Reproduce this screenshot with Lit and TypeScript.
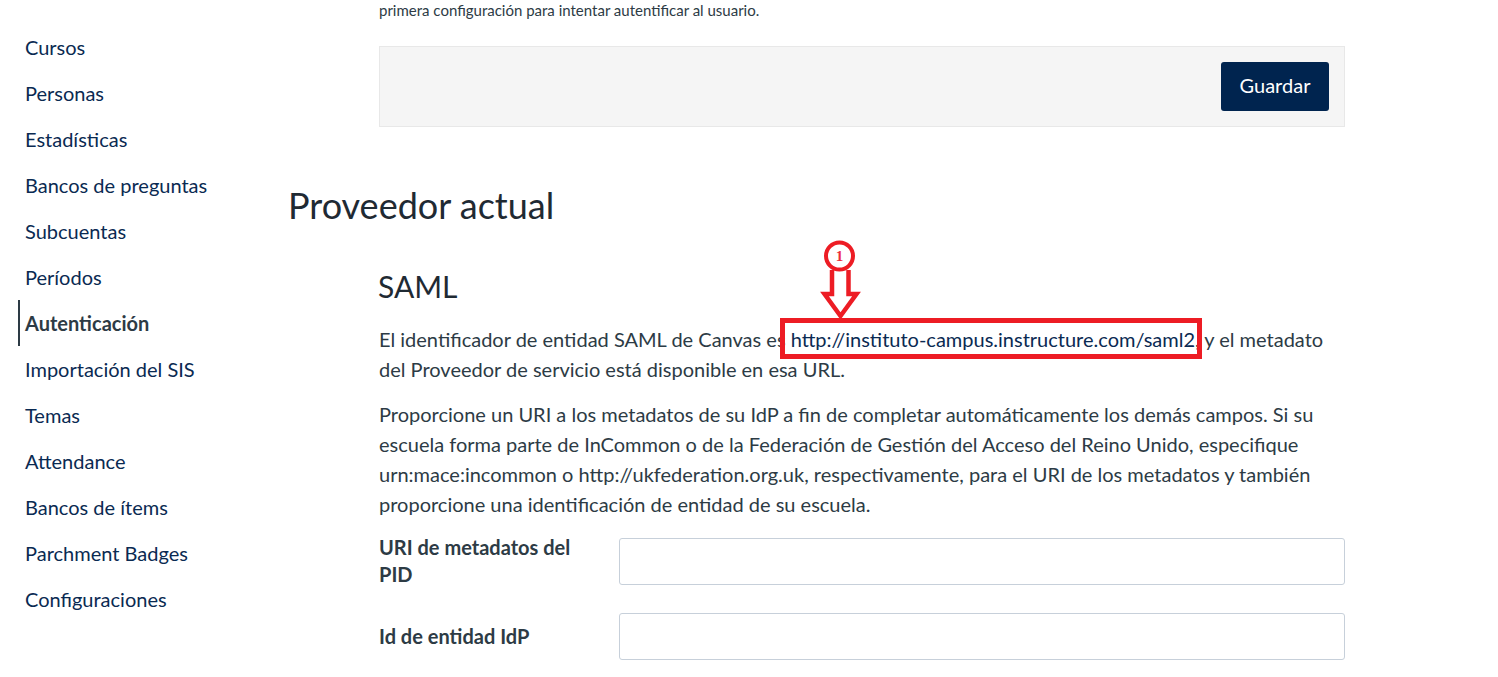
import { LitElement, html, css } from "lit";
import { customElement } from "lit/decorators.js";

const NAV = ["Cursos","Personas","Estadísticas","Bancos de preguntas","Subcuentas","Períodos","Autenticación","Importación del SIS","Temas","Attendance","Bancos de ítems","Parchment Badges","Configuraciones"];

@customElement("app-root")
export class AppRoot extends LitElement {
  static styles = css`
    :host { display: block; height: 677px; overflow: hidden; background: #fff; position: relative;
      font-family: Lato, "Liberation Sans", sans-serif; color: #2d3b45; font-size: 20px; }
    * { box-sizing: border-box; }
    .page { display: flex; align-items: flex-start; }
    nav { width: 289px; flex: none; padding: 24px 0 0 18px; display: flex; flex-direction: column; }
    nav a { height: 46px; line-height: 46px; padding-left: 7px; font-size: 20px; color: #0a2a52; }
    nav a.active { font-weight: 700; color: #2d3b45; border-left: 2px solid #2d3b45; padding-left: 5px; }
    main { width: 1056px; flex: none; }
    .note { margin: 0 0 0 90px; font-size: 15px; line-height: 20px; }
    .panel { margin: 26px 0 0 90px; height: 81px; background: #f5f5f5; border: 1px solid #e8e8e8;
      display: flex; justify-content: flex-end; align-items: center; padding-right: 15px; }
    .btn { width: 108px; height: 49px; border-radius: 3px; background: #00244f; color: #fff; display: flex;
      align-items: center; justify-content: center; font-size: 20px; padding-bottom: 4px; }
    h1 { font-weight: 400; font-size: 36px; line-height: 44px; margin: 56px 0 0 -1px; color: #1f2a33; }
    .section { margin-left: 90px; }
    h2 { font-weight: 400; font-size: 30px; line-height: 36px; margin: 41px 0 0 -1px; color: #1f2a33; }
    p { margin: 0; line-height: 30px; }
    .p1 { margin-top: 20px; }
    .p2 { margin-top: 15px; }
    .link { color: #0a2a52; }
    .field { display: grid; grid-template-columns: 240px 1fr; align-items: center; }
    .f1 { margin-top: 15px; }
    .f2 { margin-top: 25px; }
    label { font-weight: 700; line-height: 27px; width: 200px; color: #2d3b45; }
    .input { height: 47px; border: 1px solid #c7d0da; border-radius: 3px; background: #fff; }
    .f2 { margin-top: 25px; }
    .note-art { position: absolute; left: 780px; top: 240px; width: 422px; height: 120px; pointer-events: none; }
  `;

  render() {
    return html`
      <div class="page">
        <nav>${NAV.map((n) => html`<a class=${n === "Autenticación" ? "active" : ""}>${n}</a>`)}</nav>
        <main>
          <div class="note">primera configuración para intentar autentificar al usuario.</div>
          <div class="panel"><div class="btn">Guardar</div></div>
          <h1>Proveedor actual</h1>
          <div class="section">
            <h2>SAML</h2>
            <p class="p1">El identificador de entidad SAML de Canvas es <span class="link">http://instituto-campus.instructure.com/saml2</span>, y el metadato del Proveedor de servicio está disponible en esa URL.</p>
            <p class="p2">Proporcione un URI a los metadatos de su IdP a fin de completar automáticamente los demás campos. Si su escuela forma parte de InCommon o de la Federación de Gestión del Acceso del Reino Unido, especifique urn:mace:incommon o http://ukfederation.org.uk, respectivamente, para el URI de los metadatos y también proporcione una identificación de entidad de su escuela.</p>
            <div class="field f1"><label>URI de metadatos del PID</label><div class="input"></div></div>
            <div class="field f2"><label>Id de entidad IdP</label><div class="input"></div></div>
          </div>
        </main>
      </div>
      <svg class="note-art" viewBox="0 0 422 120" fill="none" stroke="#ed1c24">
        <circle cx="59.500" cy="16" r="13.500" stroke-width="4" fill="#fff"/>
        <text x="59.500" y="21" text-anchor="middle" font-family="'Liberation Serif', serif" font-weight="700" font-size="15" fill="#ed2c3c" stroke="none">1</text>
        <path d="M52 30V54H44.500L60.500 76L76.500 54H68.500V30" stroke-width="4.500"/>
        <rect x="2.500" y="80.500" width="417" height="36" stroke-width="5"/>
      </svg>
    `;
  }
}
